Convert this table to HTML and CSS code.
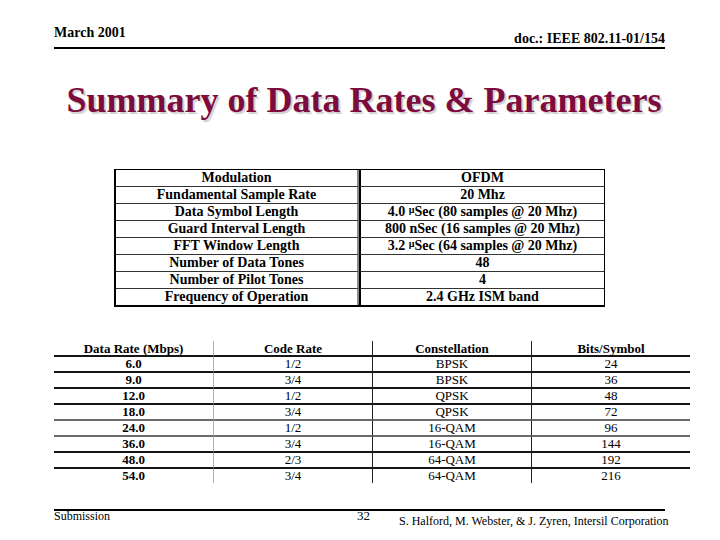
FILE: index.html
```html
<!DOCTYPE html>
<html>
<head>
<meta charset="utf-8">
<link rel="stylesheet" href="styles.css">
</head>
<body>
<div class="slide">
  <header class="top">
    <span class="date">March 2001</span>
    <span class="doc">doc.: IEEE 802.11-01/154</span>
  </header>
  <h1 class="title">Summary of Data Rates &amp; Parameters</h1>
  <table class="params">
    <tr><td class="k">Modulation</td><td class="v">OFDM</td></tr>
    <tr><td class="k">Fundamental Sample Rate</td><td class="v">20 Mhz</td></tr>
    <tr><td class="k">Data Symbol Length</td><td class="v">4.0 <span class="mu">µ</span>Sec (80 samples @ 20 Mhz)</td></tr>
    <tr><td class="k">Guard Interval Length</td><td class="v">800 nSec (16 samples @ 20 Mhz)</td></tr>
    <tr><td class="k">FFT Window Length</td><td class="v">3.2 <span class="mu">µ</span>Sec (64 samples @ 20 Mhz)</td></tr>
    <tr><td class="k">Number of Data Tones</td><td class="v">48</td></tr>
    <tr><td class="k">Number of Pilot Tones</td><td class="v">4</td></tr>
    <tr class="last"><td class="k">Frequency of Operation</td><td class="v">2.4 GHz ISM band</td></tr>
  </table>
  <table class="rates">
    <tr class="head"><th>Data Rate (Mbps)</th><th class="c2">Code Rate</th><th class="c3">Constellation</th><th class="c4">Bits/Symbol</th></tr>
    <tr><td class="rate">6.0</td><td class="c2">1/2</td><td class="c3">BPSK</td><td class="c4">24</td></tr>
    <tr><td class="rate">9.0</td><td class="c2">3/4</td><td class="c3">BPSK</td><td class="c4">36</td></tr>
    <tr><td class="rate">12.0</td><td class="c2">1/2</td><td class="c3">QPSK</td><td class="c4">48</td></tr>
    <tr class="grey"><td class="rate">18.0</td><td class="c2">3/4</td><td class="c3">QPSK</td><td class="c4">72</td></tr>
    <tr class="grey"><td class="rate">24.0</td><td class="c2">1/2</td><td class="c3">16-QAM</td><td class="c4">96</td></tr>
    <tr><td class="rate">36.0</td><td class="c2">3/4</td><td class="c3">16-QAM</td><td class="c4">144</td></tr>
    <tr><td class="rate">48.0</td><td class="c2">2/3</td><td class="c3">64-QAM</td><td class="c4">192</td></tr>
    <tr class="last"><td class="rate">54.0</td><td class="c2">3/4</td><td class="c3">64-QAM</td><td class="c4">216</td></tr>
  </table>
  <footer class="bottom">
    <div class="rule"></div>
    <div class="foot-text">
      <span class="sub">Submission</span>
      <span class="page">32</span>
      <span class="authors">S. Halford, M. Webster, &amp; J. Zyren, Intersil Corporation</span>
    </div>
  </footer>
</div>
</body>
</html>
```

FILE: styles.css
```css
* { box-sizing: border-box; }
body {
  margin: 0;
  background: #fff;
  color: #000;
  font-family: "Liberation Serif", "Times New Roman", serif;
}
.slide {
  width: 720px;
  height: 540px;
  overflow: hidden;
  background: #fff;
}
.top {
  margin: 25px 0 0 54px;
  width: 611px;
  height: 24px;
  display: flex;
  justify-content: space-between;
  border-bottom: 2px solid #000;
  font-weight: bold;
  font-size: 14px;
  line-height: 16px;
}
.date { align-self: flex-start; }
.doc { align-self: flex-end; }

.title {
  margin: 31px 0 0 0;
  padding-left: 8px;
  text-align: center;
  font-size: 36px;
  line-height: 40px;
  font-weight: bold;
  color: #7e0b3d;
  text-shadow: 2px 2px 1px #cfcfcf;
}

.params {
  margin: 49px 0 0 114px;
  width: 491px;
  border-collapse: separate;
  border-spacing: 0;
  table-layout: fixed;
  border-top: 1px solid #000;
  border-right: 1px solid #000;
  border-left: 2px solid #000;
  border-bottom: 2px solid #000;
  font-weight: bold;
  font-size: 14px;
  line-height: 16px;
}
.params td {
  height: 17px;
  padding: 0;
  text-align: center;
  border-bottom: 1px solid #333;
  white-space: nowrap;
}
.params tr.last td { border-bottom: none; height: 16px; }
.params .k {
  width: 243px;
  border-right: 2px solid #8a8a8a;
}
.params .v {
  border-left: 2px solid #000;
}
.mu {
  font-size: 10px;
  line-height: 0;
  vertical-align: 3px;
}

.rates {
  margin: 34px 0 0 54px;
  width: 636px;
  border-collapse: separate;
  border-spacing: 0;
  table-layout: fixed;
  font-size: 13px;
}
.rates th, .rates td {
  width: 159px;
  padding: 0;
  text-align: center;
  border-bottom: 2px solid #161616;
  white-space: nowrap;
}
.rates th {
  padding-top: 1px;
  line-height: 13px;
  font-weight: bold;
}
.rates td { line-height: 14px; }
.rates tr.grey td { border-bottom-color: #6a6a6a; }
.rates tr.last td { border-bottom: none; }
.rates .rate { font-weight: bold; }
.rates .c2 { border-left: 1px solid #b0b0b0; }
.rates .c3, .rates .c4 { border-left: 1px solid #222; }

.bottom { margin-top: 26px; }
.rule {
  margin-left: 54px;
  width: 611px;
  border-top: 2px solid #000;
}
.foot-text {
  display: flex;
  margin-top: -2px;
  padding-left: 54px;
  font-size: 12px;
  line-height: 14px;
}
.sub { width: 303px; }
.page { width: 42px; font-size: 13px; }
.authors { padding-top: 5px; white-space: nowrap; }
```
